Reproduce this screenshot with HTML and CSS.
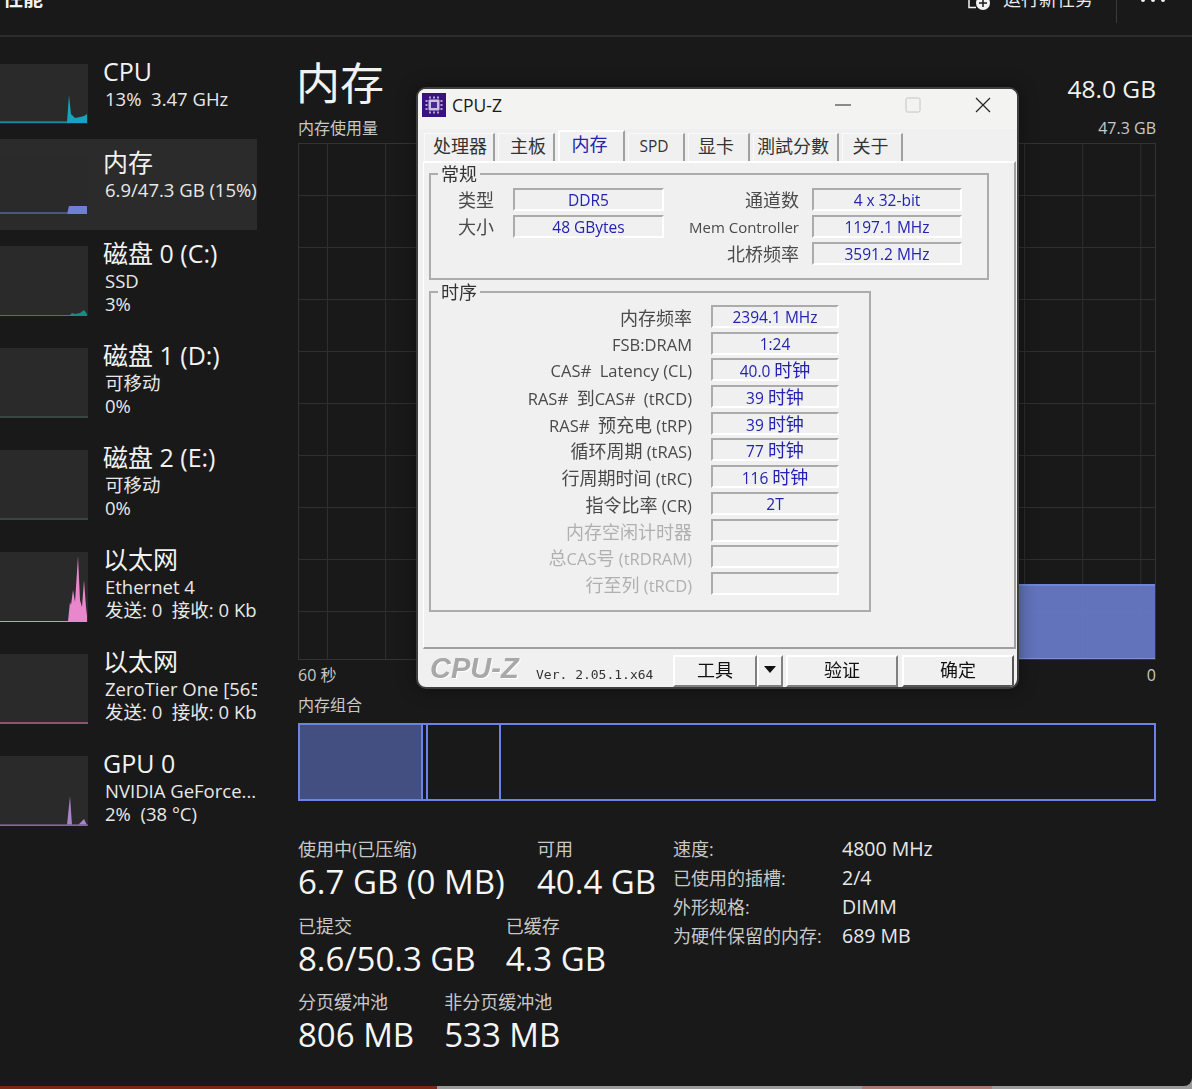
FILE: index.html
```html
<!DOCTYPE html>
<html lang="zh-CN">
<head>
<meta charset="utf-8">
<title>性能</title>
<link rel="stylesheet" href="styles.css">
</head>
<body>
<div class="app">
  <header class="topbar">
    <span class="page-title">性能</span>
    <div class="actions">
      <svg class="run-icon" width="26" height="12" viewBox="0 0 26 12"><path d="M2 0V7.500H9" fill="none" stroke="#f2f2f2" stroke-width="1.500"/><circle cx="16" cy="3" r="7" fill="#f2f2f2"/><path d="M16 -1V7M12 3H20" stroke="#191919" stroke-width="1.500"/></svg>
      <span class="run-label">运行新任务</span>
      <i class="divider"></i>
      <span class="dots"><b></b><b></b><b></b></span>
    </div>
  </header>
  <div class="body">
    <nav class="sidebar">
      <div class="item short">
        <svg class="spark sm" viewBox="0 0 88 60" preserveAspectRatio="none"><path d="M0 58H67L69 31 71 50 75 54 80 53 84 52 87 50V59H0Z" fill="#17a3bd"/><path d="M0 58H67" stroke="#1f7f90" stroke-width="1.500"/></svg>
        <div class="meta"><div class="name">CPU</div><div class="sub">13%&nbsp; 3.47 GHz</div></div>
      </div>
      <div class="item short active">
        <svg class="spark sm" viewBox="0 0 88 60" preserveAspectRatio="none"><path d="M0 58H67" stroke="#5a659f" stroke-width="1.500"/><path d="M67 59 69 51H87V59Z" fill="#6f7fd6"/></svg>
        <div class="meta"><div class="name">内存</div><div class="sub">6.9/47.3 GB (15%)</div></div>
      </div>
      <div class="item">
        <svg class="spark" viewBox="0 0 88 70"><path d="M0 69H70L72 67 75 68 80 67 84 64 87 68V70H0Z" fill="#1b8a80"/></svg>
        <div class="meta"><div class="name">磁盘 0 (C:)</div><div class="sub">SSD</div><div class="sub">3%</div></div>
      </div>
      <div class="item">
        <svg class="spark" viewBox="0 0 88 70"><path d="M0 69H88" stroke="#3f4f4c" stroke-width="1.500"/></svg>
        <div class="meta"><div class="name">磁盘 1 (D:)</div><div class="sub">可移动</div><div class="sub">0%</div></div>
      </div>
      <div class="item">
        <svg class="spark" viewBox="0 0 88 70"><path d="M0 69H88" stroke="#3f4f4c" stroke-width="1.500"/></svg>
        <div class="meta"><div class="name">磁盘 2 (E:)</div><div class="sub">可移动</div><div class="sub">0%</div></div>
      </div>
      <div class="item">
        <svg class="spark" viewBox="0 0 88 70"><path d="M0 69H68L70 50 71 53 73 38 75 50 78 4 80 48 82 55 84 28 86 55 87 64V70H0Z" fill="#ea86cb"/></svg>
        <div class="meta"><div class="name">以太网</div><div class="sub">Ethernet 4</div><div class="sub">发送: 0&nbsp; 接收: 0 Kb</div></div>
      </div>
      <div class="item">
        <svg class="spark" viewBox="0 0 88 70"><path d="M0 69H88" stroke="#a8658f" stroke-width="1.500"/></svg>
        <div class="meta"><div class="name">以太网</div><div class="sub">ZeroTier One [565D5C5F]</div><div class="sub">发送: 0&nbsp; 接收: 0 Kb</div></div>
      </div>
      <div class="item">
        <svg class="spark" viewBox="0 0 88 70"><path d="M0 69H67L70 40 72 69H78L84 63 87 69V70H0Z" fill="#a884cc"/><path d="M0 69H88" stroke="#75608c" stroke-width="1.500"/></svg>
        <div class="meta"><div class="name">GPU 0</div><div class="sub">NVIDIA GeForce...</div><div class="sub">2%&nbsp; (38 °C)</div></div>
      </div>
    </nav>
    <main class="main">
      <div class="head"><h1>内存</h1><span class="total">48.0 GB</span></div>
      <div class="caption gap-a"><span>内存使用量</span><span>47.3 GB</span></div>
      <div class="chart"><div class="chart-fill"></div></div>
      <div class="caption gap-b"><span>60 秒</span><span>0</span></div>
      <div class="caption gap-c"><span>内存组合</span></div>
      <div class="composition"><div class="seg used"></div><div class="seg mod"></div><div class="seg standby"></div></div>
      <section class="stats">
        <div class="stats-left">
          <div class="stat-row">
            <div class="stat"><div class="s-label">使用中(已压缩)</div><div class="s-value">6.7 GB (0 MB)</div></div>
            <div class="stat"><div class="s-label">可用</div><div class="s-value">40.4 GB</div></div>
          </div>
          <div class="stat-row">
            <div class="stat"><div class="s-label">已提交</div><div class="s-value">8.6/50.3 GB</div></div>
            <div class="stat"><div class="s-label">已缓存</div><div class="s-value">4.3 GB</div></div>
          </div>
          <div class="stat-row">
            <div class="stat"><div class="s-label">分页缓冲池</div><div class="s-value">806 MB</div></div>
            <div class="stat"><div class="s-label">非分页缓冲池</div><div class="s-value">533 MB</div></div>
          </div>
        </div>
        <dl class="facts">
          <dt>速度:</dt><dd>4800 MHz</dd>
          <dt>已使用的插槽:</dt><dd>2/4</dd>
          <dt>外形规格:</dt><dd>DIMM</dd>
          <dt>为硬件保留的内存:</dt><dd>689 MB</dd>
        </dl>
      </section>
    </main>
  </div>
</div>
<div class="desktop-strip"><i class="red"></i><i class="gray"></i><i class="red2"></i><i class="gray2"></i></div>

<div class="cpuz">
  <div class="titlebar">
    <svg class="logo" width="24" height="24" viewBox="0 0 24 24"><rect width="24" height="24" fill="#3a1180"/><rect x="6.500" y="6.500" width="11" height="11" rx="1" fill="#c9bfe0"/><rect x="9" y="9" width="6" height="6" fill="#4a2a90"/><path d="M8 3.500V5.500M12 3.500V5.500M16 3.500V5.500M8 18.500V20.500M12 18.500V20.500M16 18.500V20.500M3.500 8H5.500M3.500 12H5.500M3.500 16H5.500M18.500 8H20.500M18.500 12H20.500M18.500 16H20.500" stroke="#ddd5ee" stroke-width="1.500"/></svg>
    <span class="win-title">CPU-Z</span>
    <div class="win-btns">
      <svg width="16" height="16" viewBox="0 0 16 16"><path d="M0 8H16" stroke="#222" stroke-width="1"/></svg>
      <svg width="16" height="16" viewBox="0 0 16 16"><rect x="1" y="1" width="14" height="14" rx="1.500" fill="none" stroke="#c4c4c4"/></svg>
      <svg width="16" height="16" viewBox="0 0 16 16"><path d="M1 1L15 15M15 1L1 15" stroke="#222" stroke-width="1.200"/></svg>
    </div>
  </div>
  <div class="tabs">
    <span class="tab w1">处理器</span><span class="tab w2">主板</span><span class="tab w3 on">内存</span><span class="tab w4 small">SPD</span><span class="tab w5">显卡</span><span class="tab w6">測試分數</span><span class="tab w7">关于</span>
  </div>
  <div class="panel">
    <div class="group general">
      <span class="legend">常规</span>
      <div class="grid-general">
        <span class="lb c">类型</span><span class="fd">DDR5</span><span class="lb c">通道数</span><span class="fd">4 x 32-bit</span>
        <span class="lb c">大小</span><span class="fd">48 GBytes</span><span class="lb mem">Mem Controller</span><span class="fd">1197.1 MHz</span>
        <span class="lb"></span><span></span><span class="lb c">北桥频率</span><span class="fd">3591.2 MHz</span>
      </div>
    </div>
    <div class="group timing">
      <span class="legend">时序</span>
      <div class="grid-timing">
        <span class="lb c">内存频率</span><span class="fd">2394.1 MHz</span>
        <span class="lb">FSB:DRAM</span><span class="fd">1:24</span>
        <span class="lb">CAS<b class="h">#</b> Latency (CL)</span><span class="fd">40.0 <b class="c">时钟</b></span>
        <span class="lb">RAS<b class="h">#</b> <b class="c">到</b>CAS<b class="h">#</b> (tRCD)</span><span class="fd">39 <b class="c">时钟</b></span>
        <span class="lb">RAS<b class="h">#</b> <b class="c">预充电</b> (tRP)</span><span class="fd">39 <b class="c">时钟</b></span>
        <span class="lb"><b class="c">循环周期</b> (tRAS)</span><span class="fd">77 <b class="c">时钟</b></span>
        <span class="lb"><b class="c">行周期时间</b> (tRC)</span><span class="fd">116 <b class="c">时钟</b></span>
        <span class="lb"><b class="c">指令比率</b> (CR)</span><span class="fd">2T</span>
        <span class="lb off c">内存空闲计时器</span><span class="fd"></span>
        <span class="lb off"><b class="c">总</b>CAS<b class="c">号</b> (tRDRAM)</span><span class="fd"></span>
        <span class="lb off"><b class="c">行至列</b> (tRCD)</span><span class="fd"></span>
      </div>
    </div>
  </div>
  <div class="footer">
    <span class="brand">CPU-Z</span>
    <span class="ver">Ver. 2.05.1.x64</span>
    <div class="buttons">
      <span class="btn tool">工具</span><span class="btn drop"><i></i></span><span class="btn wide">验证</span><span class="btn wide default">确定</span>
    </div>
  </div>
</div>
</body>
</html>
```
FILE: styles.css
```css
* { box-sizing: border-box; }
html, body { margin: 0; height: 1089px; overflow: hidden; background: #9a9a9a; }
body { font-family: "Open Sans", "Noto Sans CJK SC", sans-serif; color: #f2f2f2; position: relative; }

.app { height: 1086px; background: #191919; border-bottom-right-radius: 8px; overflow: hidden; }

.topbar { height: 37px; border-bottom: 2px solid #2d2d2d; display: flex; justify-content: space-between; overflow: hidden; }
.page-title { font-size: 20px; line-height: 28px; font-weight: 600; margin: -15px 0 0 3px; height: 28px; }
.actions { display: flex; align-items: flex-start; margin-right: 27px; }
.run-icon { margin: 0 10px 0 0; }
.run-label { font-size: 18px; line-height: 24px; margin-top: -13px; color: #ececec; }
.divider { width: 1px; height: 23px; background: #3a3a3a; margin: 0 24px 0 23px; }
.dots { display: flex; gap: 6px; margin-top: -2px; }
.dots b { width: 4px; height: 4px; border-radius: 50%; background: #f2f2f2; }

.body { display: flex; height: 1049px; }
.sidebar { width: 257px; flex: none; padding-top: 11px; margin-right: 41px; }

.item { height: 102px; padding-top: 16px; display: flex; gap: 15px; overflow: hidden; align-items: flex-start; white-space: nowrap; }
.item.short { height: 91px; }
.spark { display: block; width: 88px; height: 70px; flex: none; background: #2a2a2a; }
.spark.sm { height: 60px; }
.item.active { background: #2b2b2b; }
.meta { min-width: 0; margin-top: -9px; }
.name { font-size: 25px; line-height: 32px; }
.sub { font-size: 18.500px; line-height: 23px; margin-left: 2px; color: #e8e8e8; }

.main { width: 858px; flex: none; }
.head { display: flex; justify-content: space-between; align-items: flex-end; height: 74px; }
h1 { margin: 0 0 0 -2px; font-size: 44px; line-height: 56px; font-weight: 400; }
.total { font-size: 24.500px; line-height: 32px; margin-bottom: 6px; }
.caption { display: flex; justify-content: space-between; font-size: 16px; line-height: 20px; color: #c8c8c8; }
.gap-a { margin-top: 7px; height: 25px; }
.gap-b { margin-top: 5px; height: 20px; }
.gap-c { margin-top: 10px; height: 28px; }
.chart { height: 517px; position: relative; border: 1px solid #333; background-color: #191919;
  background-image: linear-gradient(#2f2f2f 1px, transparent 1px), linear-gradient(90deg, #2f2f2f 1px, transparent 1px);
  background-size: 100% 52px, 58.100px 100%; background-position: 0 -1px, 28px 0; }
.chart-fill { position: absolute; right: 0; bottom: 0; left: 700px; height: 75px; background: rgba(108, 128, 211, .88); border-top: 2px solid #6f85dc; border-bottom: 1px solid #8090d0; }

.composition { height: 78px; border: 2px solid #6c82e6; display: flex; }
.seg { height: 100%; border-right: 2px solid #6c82e6; }
.seg.used { width: 123px; background: #434f80; }
.seg.mod { width: 5px; }
.seg.standby { width: 73px; }

.stats { display: flex; margin-top: 36px; }
.stats-left { width: 375px; flex: none; }
.stat-row { display: flex; gap: 30px; height: 76.500px; }
.stat-row:first-child .stat:first-child { min-width: 209px; }
.s-label { font-size: 18px; line-height: 24px; color: #c8c8c8; }
.s-value { font-size: 33px; line-height: 40px; color: #f5f5f5; margin-top: 1px; }
.facts { margin: 0; display: grid; grid-template-columns: 169px auto; grid-auto-rows: 29px; align-content: start; font-size: 19.500px; line-height: 24px; justify-content: start; }
.facts dt { color: #c8c8c8; font-size: 18px; }
.facts dd { margin: 0; color: #e8e8e8; }

.desktop-strip { display: flex; height: 3px; }
.desktop-strip i { display: block; height: 3px; }
.red { width: 437px; background: #7a2a14; }
.gray { width: 425px; background: #9a9a9a; }
.red2 { width: 130px; background: #a97a72; }
.gray2 { flex: 1; background: #9a9a9a; }

/* CPU-Z floating window */
.cpuz { position: absolute; left: 416px; top: 87px; width: 603px; height: 602px; border: 2px solid #3f3f3f; border-radius: 10px; background: #f0f0f0; overflow: hidden; color: #333; font-size: 15.500px; display: flex; flex-direction: column; box-shadow: 0 0 18px rgba(0, 0, 0, .4); }
.titlebar { height: 40px; flex: none; background: #f3f3f1; display: flex; align-items: center; padding: 0 0 8px 4px; }
.win-title { font-size: 17.500px; margin-left: 6px; color: #1a1a1a; }
.win-btns { margin-left: auto; display: flex; gap: 54px; margin-right: 26px; align-items: center; }

.tabs { display: flex; height: 32px; flex: none; padding: 4px 0 0 6px; gap: 3px; align-items: flex-end; }
.tab { height: 28px; background: #f0f0f0; border-top: 1px solid #fafafa; border-left: 1px solid #fafafa; border-right: 2px solid #a0a0a0; text-align: center; font-size: 18px; line-height: 25px; color: #333; display: block; flex: none; }
.tab.small { font-size: 15.500px; }
.tab.on { height: 31px; color: #2323b0; border-top: 2px solid #fff; border-left: 2px solid #fff; line-height: 25px; }
.w1 { width: 71px; padding-left: 2px; }
.w2 { width: 57px; padding-left: 4px; }
.w3 { width: 67px; padding-right: 4px; }
.w4 { width: 57px; padding-right: 4px; }
.w5 { width: 62px; padding-right: 5px; }
.w6 { width: 86px; padding-right: 5px; }
.w7 { width: 61px; padding-right: 3px; }

.panel { height: 488px; flex: none; margin-left: 5px; width: 593px; border-top: 2px solid #fff; border-left: 1px solid #fff; border-right: 2px solid #9f9f9f; border-bottom: 2px solid #9f9f9f; padding: 10px 0 0 5px; filter: blur(.3px); }
.group { position: relative; border: 2px solid #acacac; }
.legend { position: absolute; left: 7px; top: -11px; background: #f0f0f0; padding: 0 3px; font-size: 18px; line-height: 20px; color: #333; }
.general { width: 560px; height: 107px; padding: 13px 0 0 1px; }
.timing { width: 442px; height: 321px; margin-top: 11px; padding: 12px 0 0 1px; }
.grid-general { display: grid; grid-template-columns: 62px 170px 135px 163px; grid-auto-rows: 23px; row-gap: 4px; }
.grid-general > :nth-child(4n+2) { margin-left: 19px; }
.grid-general > :nth-child(4n) { margin-left: 13px; }
.grid-timing { display: grid; grid-template-columns: 260px 128px; column-gap: 19px; grid-auto-rows: 23px; row-gap: 3.700px; }
.lb { text-align: right; line-height: 24px; white-space: nowrap; color: #4a4a4a; }
.mem { font-size: 15px; }
.grid-timing .lb { font-size: 16.500px; line-height: 26px; }
.lb.off { color: #b0b0b0; }
.fd { border: 2px solid; border-color: #ababab #fff #fff #ababab; text-align: center; line-height: 20px; color: #2323b0; white-space: nowrap; }
.c, .grid-timing .lb.c { font-size: 18px; font-weight: 400; }
.h { font-size: 17px; font-weight: 400; letter-spacing: 4px; }

.footer { flex: 1; display: flex; align-items: center; padding-left: 12px; filter: blur(.25px); }
.brand { font-family: "Liberation Sans", sans-serif; font-weight: 700; font-style: italic; font-size: 29px; color: #a8a8a8; width: 106px; flex: none; text-shadow: 1px 1px 0 #fff; }
.ver { font-family: "DejaVu Sans Mono", monospace; font-size: 13px; color: #333; width: 137px; flex: none; margin-top: 12px; }
.buttons { display: flex; align-self: flex-end; height: 32px; }
.btn { display: flex; align-items: center; justify-content: center; background: #f0f0f0; border: 2px solid; border-color: #fff #808080 #808080 #fff; font-size: 18px; color: #111; padding-bottom: 4px; }
.tool { width: 84px; }
.drop { width: 26px; margin-right: 3px; }
.drop i { width: 0; height: 0; border: 6px solid transparent; border-top: 7px solid #111; border-bottom: 0; }
.wide { width: 112px; margin-right: 4px; }
.default { border-color: #fff #555 #555 #fff; margin-right: 0; }
```
